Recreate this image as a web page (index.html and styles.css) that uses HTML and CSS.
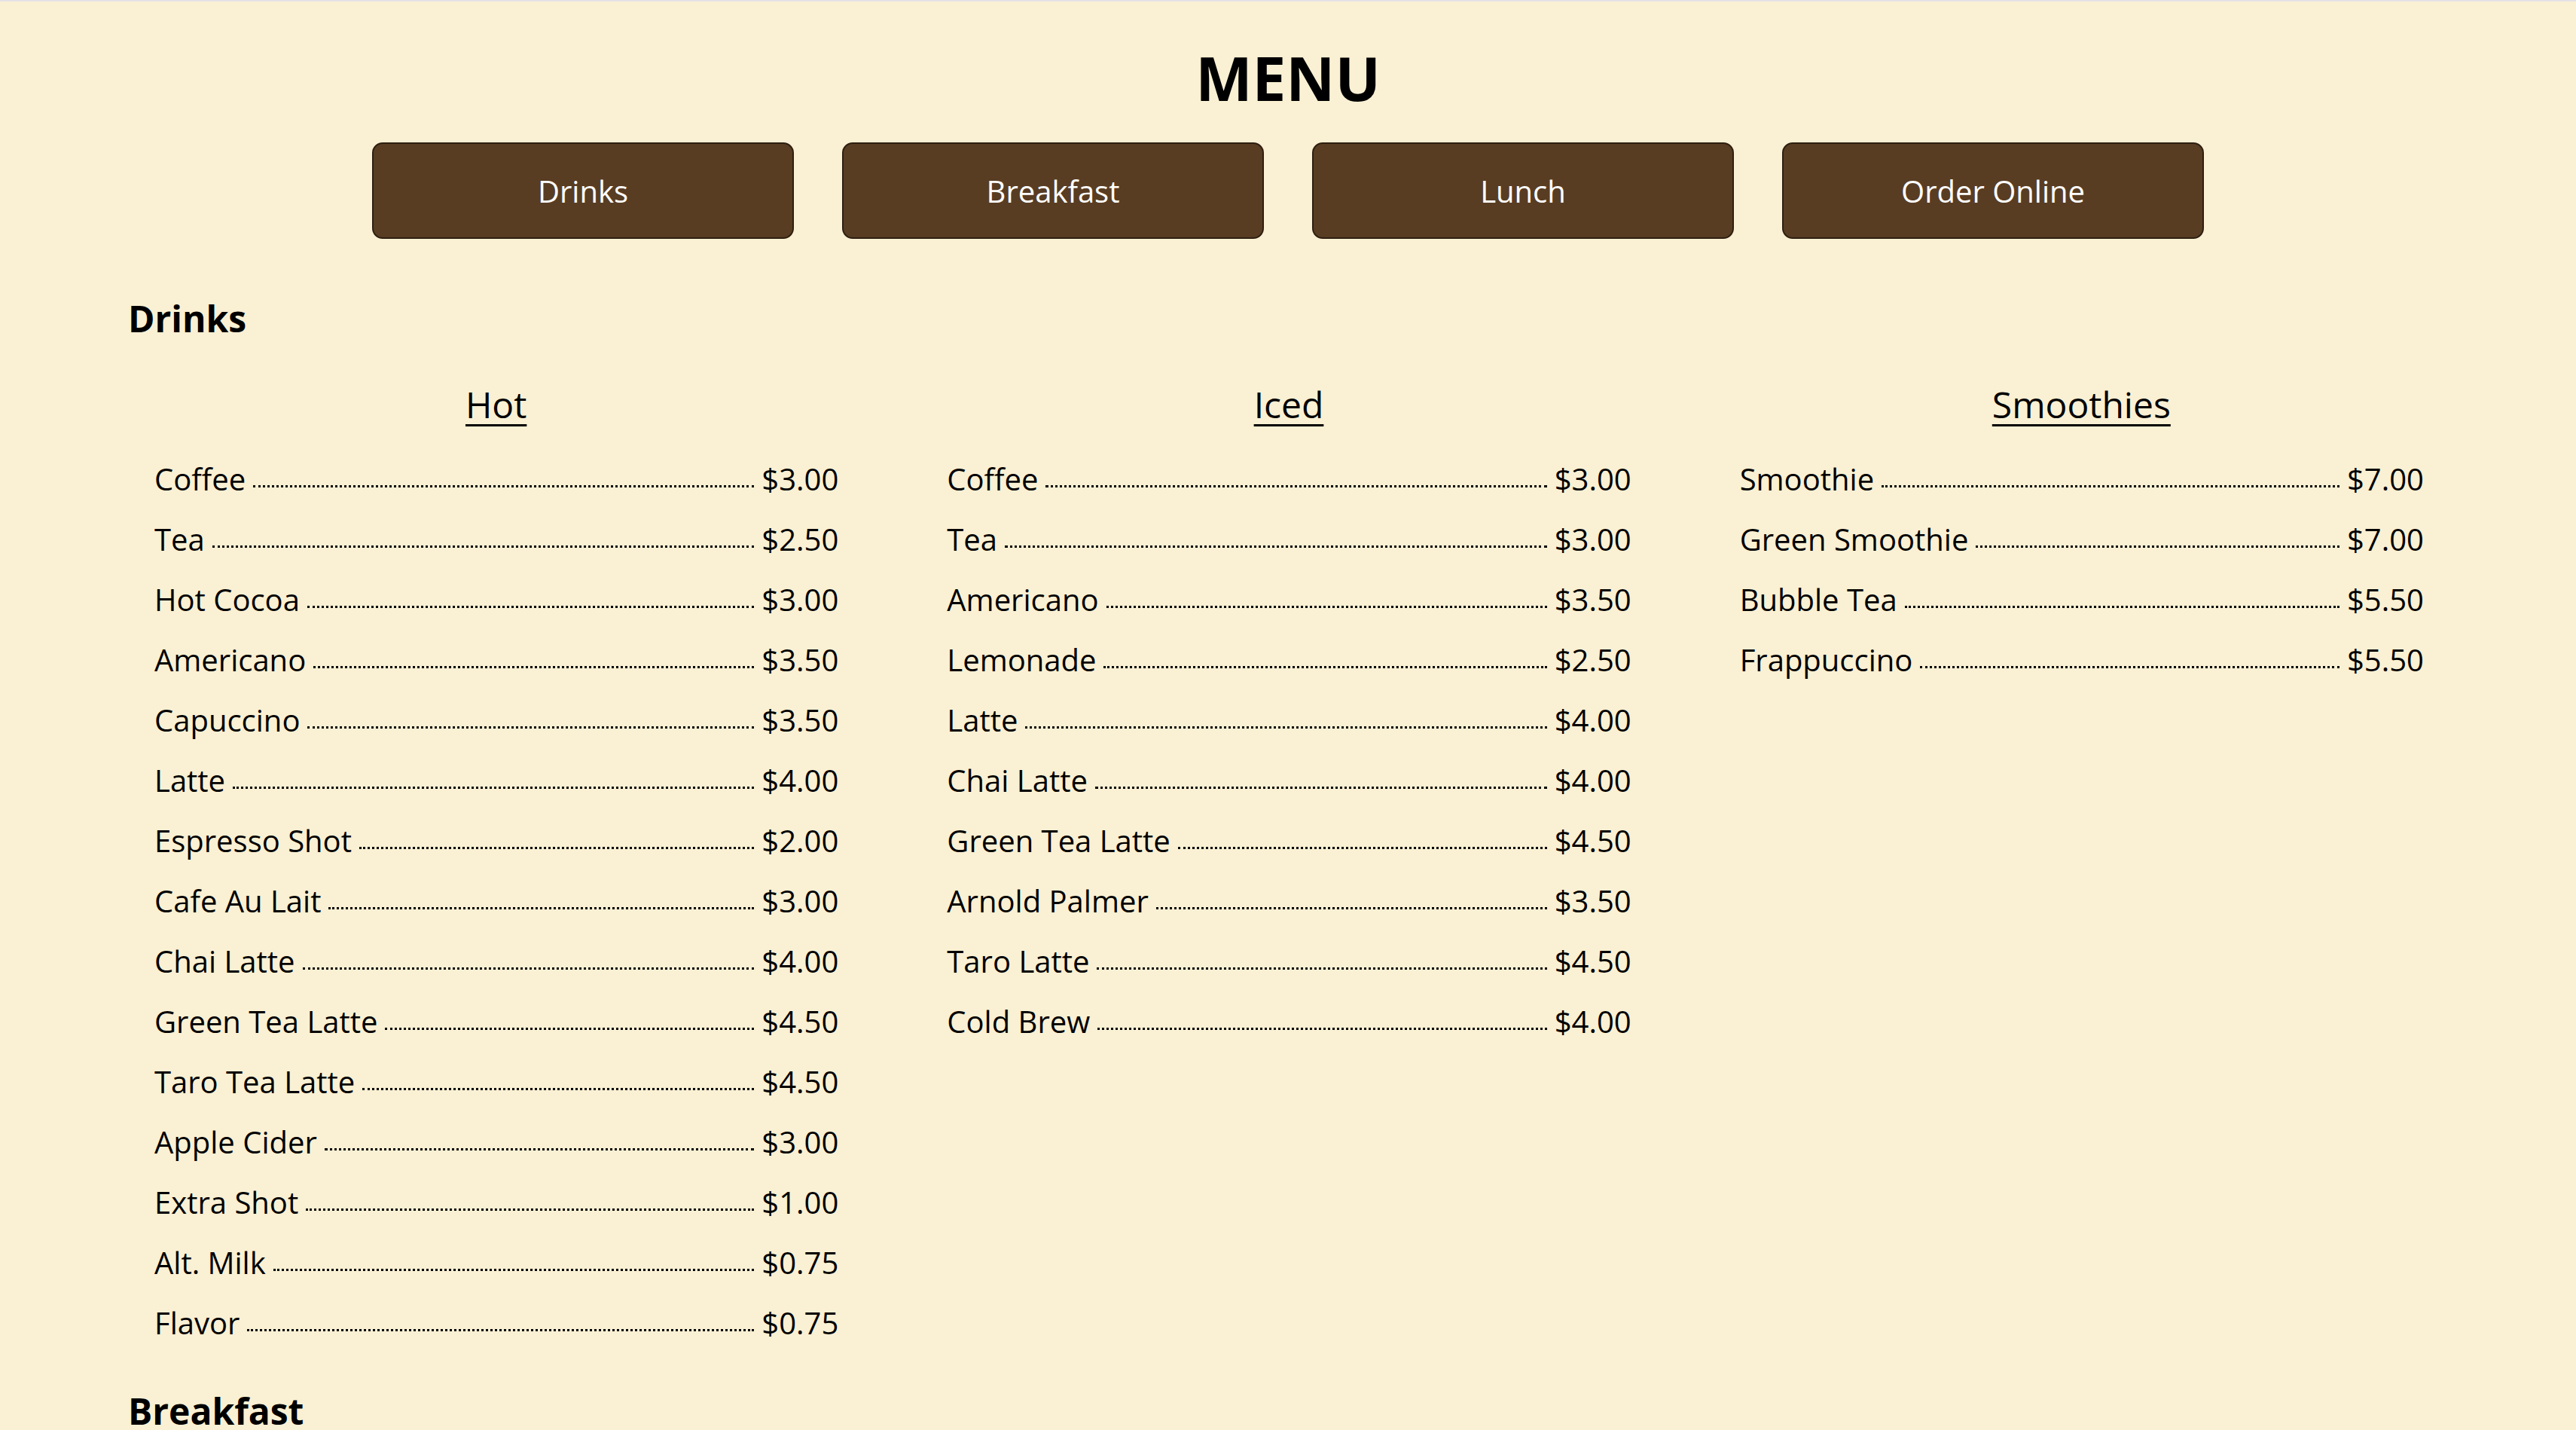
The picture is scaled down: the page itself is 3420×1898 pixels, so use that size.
FILE: index.html
```html
<!DOCTYPE html>
<html lang="en">
<head>
<meta charset="utf-8">
<title>Menu</title>
<link rel="stylesheet" href="styles.css">
</head>
<body>
<header class="page-header">
  <h1 class="title">MENU</h1>
  <nav class="nav">
    <a class="nav-btn" href="#drinks">Drinks</a>
    <a class="nav-btn" href="#breakfast">Breakfast</a>
    <a class="nav-btn" href="#lunch">Lunch</a>
    <a class="nav-btn" href="#order">Order Online</a>
  </nav>
</header>
<main class="content">
  <section class="section" id="drinks">
    <h2 class="section-title">Drinks</h2>
    <div class="columns">
      <div class="column">
        <h3 class="column-title">Hot</h3>
        <ul class="items">
          <li class="item"><span class="name">Coffee</span><span class="dots"></span><span class="price">$3.00</span></li>
          <li class="item"><span class="name">Tea</span><span class="dots"></span><span class="price">$2.50</span></li>
          <li class="item"><span class="name">Hot Cocoa</span><span class="dots"></span><span class="price">$3.00</span></li>
          <li class="item"><span class="name">Americano</span><span class="dots"></span><span class="price">$3.50</span></li>
          <li class="item"><span class="name">Capuccino</span><span class="dots"></span><span class="price">$3.50</span></li>
          <li class="item"><span class="name">Latte</span><span class="dots"></span><span class="price">$4.00</span></li>
          <li class="item"><span class="name">Espresso Shot</span><span class="dots"></span><span class="price">$2.00</span></li>
          <li class="item"><span class="name">Cafe Au Lait</span><span class="dots"></span><span class="price">$3.00</span></li>
          <li class="item"><span class="name">Chai Latte</span><span class="dots"></span><span class="price">$4.00</span></li>
          <li class="item"><span class="name">Green Tea Latte</span><span class="dots"></span><span class="price">$4.50</span></li>
          <li class="item"><span class="name">Taro Tea Latte</span><span class="dots"></span><span class="price">$4.50</span></li>
          <li class="item"><span class="name">Apple Cider</span><span class="dots"></span><span class="price">$3.00</span></li>
          <li class="item"><span class="name">Extra Shot</span><span class="dots"></span><span class="price">$1.00</span></li>
          <li class="item"><span class="name">Alt. Milk</span><span class="dots"></span><span class="price">$0.75</span></li>
          <li class="item"><span class="name">Flavor</span><span class="dots"></span><span class="price">$0.75</span></li>
        </ul>
      </div>
      <div class="column">
        <h3 class="column-title">Iced</h3>
        <ul class="items">
          <li class="item"><span class="name">Coffee</span><span class="dots"></span><span class="price">$3.00</span></li>
          <li class="item"><span class="name">Tea</span><span class="dots"></span><span class="price">$3.00</span></li>
          <li class="item"><span class="name">Americano</span><span class="dots"></span><span class="price">$3.50</span></li>
          <li class="item"><span class="name">Lemonade</span><span class="dots"></span><span class="price">$2.50</span></li>
          <li class="item"><span class="name">Latte</span><span class="dots"></span><span class="price">$4.00</span></li>
          <li class="item"><span class="name">Chai Latte</span><span class="dots"></span><span class="price">$4.00</span></li>
          <li class="item"><span class="name">Green Tea Latte</span><span class="dots"></span><span class="price">$4.50</span></li>
          <li class="item"><span class="name">Arnold Palmer</span><span class="dots"></span><span class="price">$3.50</span></li>
          <li class="item"><span class="name">Taro Latte</span><span class="dots"></span><span class="price">$4.50</span></li>
          <li class="item"><span class="name">Cold Brew</span><span class="dots"></span><span class="price">$4.00</span></li>
        </ul>
      </div>
      <div class="column">
        <h3 class="column-title">Smoothies</h3>
        <ul class="items">
          <li class="item"><span class="name">Smoothie</span><span class="dots"></span><span class="price">$7.00</span></li>
          <li class="item"><span class="name">Green Smoothie</span><span class="dots"></span><span class="price">$7.00</span></li>
          <li class="item"><span class="name">Bubble Tea</span><span class="dots"></span><span class="price">$5.50</span></li>
          <li class="item"><span class="name">Frappuccino</span><span class="dots"></span><span class="price">$5.50</span></li>
        </ul>
      </div>
    </div>
  </section>
  <section class="section section-next" id="breakfast">
    <h2 class="section-title">Breakfast</h2>
  </section>
</main>
</body>
</html>
```

FILE: styles.css
```css
html, body {
  margin: 0;
  padding: 0;
}
body {
  background: #faf0d3;
  border-top: 2px solid #e4e2e6;
  font-family: "Open Sans", "Noto Sans", sans-serif;
  color: #000;
  overflow: hidden;
  height: 1896px;
}
.page-header {
  display: flex;
  flex-direction: column;
  align-items: center;
}
.title {
  margin: 51px 0 0;
  font-size: 80px;
  line-height: 100px;
  font-weight: 700;
}
.nav {
  display: flex;
  gap: 64px;
  margin-top: 36px;
}
.nav-btn {
  box-sizing: border-box;
  width: 560px;
  height: 128px;
  display: flex;
  align-items: center;
  justify-content: center;
  background: #583d23;
  border: 2px solid #2e1f10;
  border-radius: 14px;
  color: #fff;
  font-size: 40px;
  text-decoration: none;
}
.content {
  padding: 0 168px 0 170px;
}
.section {
  margin-top: 74px;
}
.section-next {
  margin-top: 45px;
}
.section-title {
  margin: 0;
  font-size: 48px;
  line-height: 64px;
  font-weight: 700;
}
.columns {
  display: grid;
  grid-template-columns: repeat(3, 1fr);
  column-gap: 75px;
  margin-top: 50px;
}
.column-title {
  margin: 0;
  text-align: center;
  font-size: 48px;
  line-height: 64px;
  font-weight: 400;
  text-decoration: underline;
  text-decoration-thickness: 3px;
  text-underline-offset: 8px;
}
.items {
  list-style: none;
  margin: 27px 0 0;
  padding: 0 34px 0 35px;
}
.item {
  display: flex;
  align-items: baseline;
  font-size: 40px;
  line-height: 80px;
}
.name, .price {
  white-space: nowrap;
}
.dots {
  flex: 1;
  margin: 0 10px;
  border-bottom: 3px dotted #000;
  transform: translateY(-4px);
}
```
